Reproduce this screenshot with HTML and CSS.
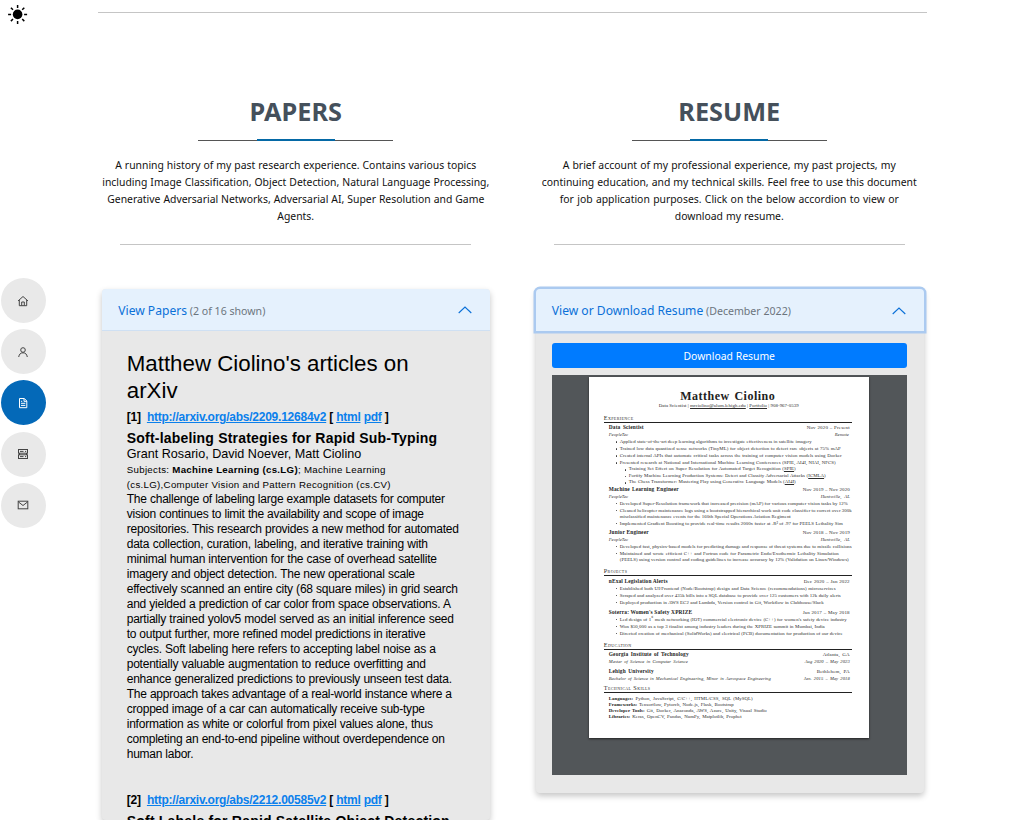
FILE: index.html
```html
<!DOCTYPE html>
<html lang="en">
<head>
<meta charset="utf-8">
<title>Papers and Resume</title>
<link rel="stylesheet" href="styles.css">
</head>
<body>
<div class="theme-toggle">
<svg width="20" height="20" viewBox="0 0 20 20"><circle cx="9.600" cy="10.400" r="4.8" fill="#000"/><path d="M9.600 .9v3M9.600 16.900v3M.1 10.400h3M16.100 10.400h3M2.900 3.700l2.100 2.100M14.200 15l2.100 2.100M2.900 17.100l2.100-2.100M14.200 5.800l2.100-2.100" stroke="#000" stroke-width="1.500"/></svg>
</div>
<nav class="side-nav">
<a class="dot"><svg viewBox="0 0 12 12"><path d="M1 6L6 1.500L11 6M2.300 5V10.700H9.700V5M4.700 10.500V7H7.300V10.500"/></svg></a>
<a class="dot"><svg viewBox="0 0 12 12"><circle cx="6" cy="4" r="2.300"/><path d="M1.700 11C2.200 8.200 3.500 6.800 6 6.800S9.800 8.200 10.300 11"/></svg></a>
<a class="dot active"><svg viewBox="0 0 12 12"><path d="M2.500 1.500H7.300L9.800 4V10.700H2.500ZM7 1.500V4.300H9.800M4 6.300H8.300M4 8.400H8.300M4 4.300H5.200"/></svg></a>
<a class="dot"><svg viewBox="0 0 12 12"><rect x="1.500" y="1.500" width="9" height="3.700"/><rect x="1.500" y="6.800" width="9" height="3.700"/><path d="M3 3.400H6.500M8 3.400H9.200M3 8.600H6.500M8 8.600H9.200M2.500 5V7M9.500 5V7"/></svg></a>
<a class="dot"><svg viewBox="0 0 12 12"><rect x="1.200" y="2.200" width="9.600" height="7.600"/><path d="M1.500 3L6 6.500L10.500 3"/></svg></a>
</nav>
<main>
<hr class="top-rule">
<div class="columns">
<section class="column">
<h2>PAPERS</h2>
<div class="title-rule"></div>
<div class="intro">
<p style="width:361px">A running history of my past research experience. Contains various topics</p>
<p style="width:387px">including Image Classification, Object Detection, Natural Language Processing,</p>
<p style="width:377px">Generative Adversarial Networks, Adversarial AI, Super Resolution and Game</p>
<p style="width:37px">Agents.</p>
</div>
<hr class="intro-rule">
<div class="card papers">
<button class="card-head"><span><b>View Papers</b> (2 of 16 shown)</span><svg class="chevron" viewBox="0 0 14 8"><path d="M.7 7L7 1L13.300 7"/></svg></button>
<div class="articles">
<h3>Matthew Ciolino's articles on<br>arXiv</h3>
<div class="ref">[1] &nbsp;<a>http://arxiv.org/abs/2209.12684v2</a> [ <a>html</a> <a>pdf</a> ]</div>
<h4>Soft-labeling Strategies for Rapid Sub-Typing</h4>
<div class="authors">Grant Rosario, David Noever, Matt Ciolino</div>
<div class="subjects">Subjects: <b>Machine Learning (cs.LG)</b>; Machine Learning<br>(cs.LG),Computer Vision and Pattern Recognition (cs.CV)</div>
<div class="abstract">
<p style="width:318px">The challenge of labeling large example datasets for computer</p>
<p style="width:297px">vision continues to limit the availability and scope of image</p>
<p style="width:332px">repositories. This research provides a new method for automated</p>
<p style="width:301px">data collection, curation, labeling, and iterative training with</p>
<p style="width:310px">minimal human intervention for the case of overhead satellite</p>
<p style="width:288px">imagery and object detection. The new operational scale</p>
<p style="width:331px">effectively scanned an entire city (68 square miles) in grid search</p>
<p style="width:324px">and yielded a prediction of car color from space observations. A</p>
<p style="width:327px">partially trained yolov5 model served as an initial inference seed</p>
<p style="width:298px">to output further, more refined model predictions in iterative</p>
<p style="width:309px">cycles. Soft labeling here refers to accepting label noise as a</p>
<p style="width:299px">potentially valuable augmentation to reduce overfitting and</p>
<p style="width:325px">enhance generalized predictions to previously unseen test data.</p>
<p style="width:325px">The approach takes advantage of a real-world instance where a</p>
<p style="width:298px">cropped image of a car can automatically receive sub-type</p>
<p style="width:306px">information as white or colorful from pixel values alone, thus</p>
<p style="width:318px">completing an end-to-end pipeline without overdependence on</p>
<p style="width:66px">human labor.</p>
</div>
<div class="ref">[2] &nbsp;<a>http://arxiv.org/abs/2212.00585v2</a> [ <a>html</a> <a>pdf</a> ]</div>
<h4>Soft Labels for Rapid Satellite Object Detection</h4>
</div>
</div>
</section>
<section class="column">
<h2>RESUME</h2>
<div class="title-rule"></div>
<div class="intro">
<p style="width:333px">A brief account of my professional experience, my past projects, my</p>
<p style="width:375px">continuing education, and my technical skills. Feel free to use this document</p>
<p style="width:339px">for job application purposes. Click on the below accordion to view or</p>
<p style="width:109px">download my resume.</p>
</div>
<hr class="intro-rule">
<div class="card resume">
<button class="card-head focused"><span><b>View or Download Resume</b> (December 2022)</span><svg class="chevron" viewBox="0 0 14 8"><path d="M.7 7L7 1L13.300 7"/></svg></button>
<div class="resume-body">
<button class="download">Download Resume</button>
<div class="viewer">
<article class="page">
<h1>Matthew Ciolino</h1>
<p class="contact">Data Scientist | <u>mrciolino@alum.lehigh.edu</u> | <u>Portfolio</u> | 908-967-0539</p>
<h5>Experience</h5>
<div class="row"><b style="width:35px">Data Scientist</b><span style="width:43px">Nov 2020 – Present</span></div>
<div class="row it"><i style="width:20px">PeopleTec</i><i style="width:15px">Remote</i></div>
<ul>
<li style="width:192px">Applied state-of-the-art deep learning algorithms to investigate effectiveness in satellite imagery</li>
<li style="width:221px">Trained low data quantized sense networks (TinyML) for object detection to detect rare objects at 75% mAP</li>
<li style="width:222px">Created internal APIs that automate critical tasks across the training of computer vision models using Docker</li>
<li style="width:216px">Presented research at National and International Machine Learning Conferences (SPIE, AI4I, NIAI, NFCS)</li>
</ul>
<ul class="sub">
<li style="width:167px">Training Set Effect on Super Resolution for Automated Target Recognition (<u>SPIE</u>)</li>
<li style="width:197px">Fortify Machine Learning Production Systems: Detect and Classify Adversarial Attacks (<u>ICMLA</u>)</li>
<li style="width:167px">The Chess Transformer: Mastering Play using Generative Language Models (<u>AI4I</u>)</li>
</ul>
<div class="row"><b style="width:70px">Machine Learning Engineer</b><span style="width:47px">Nov 2019 – Nov 2020</span></div>
<div class="row it"><i style="width:20px">PeopleTec</i><i style="width:29px">Huntsville, AL</i></div>
<ul>
<li style="width:228px">Developed Super-Resolution framework that increased precision (mAP) for various computer vision tasks by 12%</li>
<li style="width:232px">Cleaned helicopter maintenance logs using a bootstrapped hierarchical work unit code classifier to correct over 300k</li>
<li class="cont" style="width:171px">misclassified maintenance events for the 160th Special Operations Aviation Regiment</li>
<li style="width:223px">Implemented Gradient Boosting to provide real-time results 2000x faster at .R² of .97 for PEELS Lethality Sim</li>
</ul>
<div class="row gap2"><b style="width:40px">Junior Engineer</b><span style="width:47px">Nov 2018 – Nov 2019</span></div>
<div class="row it"><i style="width:20px">PeopleTec</i><i style="width:29px">Huntsville, AL</i></div>
<ul>
<li style="width:229px">Developed fast, physics-based models for predicting damage and response of threat systems due to missile collisions</li>
<li style="width:219px">Maintained and wrote efficient C++ and Fortran code for Parametric Endo/Exothermic Lethality Simulation</li>
<li class="cont" style="width:229px">(PEELS) using version control and coding guidelines to increase accuracy by 12% (Validation on Linux/Windows)</li>
</ul>
<h5 class="later">Projects</h5>
<div class="row"><b style="width:55px">nExal Legislation Alerts</b><span style="width:46px">Dec 2020 – Jan 2022</span></div>
<ul>
<li style="width:216px">Established both UI/Frontend (Node/Bootstrap) design and Data Science (recommendations) microservices</li>
<li style="width:221px">Scraped and analyzed over 435k bills into a SQL database to provide over 125 customers with 12k daily alerts</li>
<li style="width:204px">Deployed production in AWS EC2 and Lambda, Version control in Git, Workflow in Clubhouse/Slack</li>
</ul>
<div class="row gap3"><b style="width:80px">Soterra: Women's Safety XPRIZE</b><span style="width:47px">Jan 2017 – May 2018</span></div>
<ul>
<li style="width:227px">Led design of 1<sup>st</sup> mesh networking (IOT) commercial electronic device (C++) for women's safety device industry</li>
<li style="width:205px">Won $50,000 as a top 3 finalist among industry leaders during the XPRIZE summit in Mumbai, India</li>
<li style="width:223px">Directed creation of mechanical (SolidWorks) and electrical (PCB) documentation for production of our device</li>
</ul>
<h5 class="later education-head">Education</h5>
<div class="row"><b style="width:80px">Georgia Institute of Technology</b><span style="width:27px">Atlanta, GA</span></div>
<div class="row it"><i style="width:79px">Master of Science in Computer Science</i><i style="width:45px">Aug 2020 – May 2023</i></div>
<div class="row gap3"><b style="width:45px">Lehigh University</b><span style="width:33px">Bethlehem, PA</span></div>
<div class="row it"><i style="width:162px">Bachelor of Science in Mechanical Engineering, Minor in Aerospace Engineering</i><i style="width:46px">Jan. 2015 – May 2018</i></div>
<h5 class="skills-head">Technical Skills</h5>
<div class="skills">
<p style="width:144px"><b>Languages:</b> Python, JavaScript, C/C++, HTML/CSS, SQL (MySQL)</p>
<p style="width:125px"><b>Frameworks:</b> Tensorflow, Pytorch, Node.js, Flask, Bootstrap</p>
<p style="width:158px"><b>Developer Tools:</b> Git, Docker, Anaconda, AWS, Azure, Unity, Visual Studio</p>
<p style="width:133px"><b>Libraries:</b> Keras, OpenCV, Pandas, NumPy, Matplotlib, Prophet</p>
</div>
</article>
</div>
</div>
</div>
</section>
</div>
</main>
</body>
</html>
```
FILE: styles.css
```css
* { box-sizing: border-box; margin: 0; padding: 0; }
body { height: 820px; overflow: hidden; background: #fff; color: #000; font-family: "Noto Sans", sans-serif; }
button { border: 0; font-family: inherit; }

.theme-toggle { position: fixed; left: 8px; top: 4px; }
.theme-toggle svg { display: block; }
.side-nav { position: fixed; left: 1px; top: 278px; display: flex; flex-direction: column; gap: 6.2px; }
.dot { width: 45px; height: 45px; border-radius: 50%; background: #e9e9e9; display: flex; align-items: center; justify-content: center; padding: 0 1px 0 0; }
.dot svg { width: 12px; height: 12px; fill: none; stroke: #444; stroke-width: 1; }
.dot.active { background: #0469b8; }
.dot.active svg { stroke: #fff; }

main { height: 820px; overflow: hidden; padding: 12px 0 0 79px; }
hr { border: 0; height: 1px; background: #c5c5c5; }
.top-rule { width: 829px; margin-left: 19px; }
.columns { display: grid; grid-template-columns: 433.500px 433.500px; padding-top: 80px; }
.column { display: flex; flex-direction: column; align-items: center; }
h2 { font-size: 25.300px; line-height: 36px; font-weight: 700; color: #45505b; }
.title-rule { width: 195px; height: 3px; margin: 9px 0 16px; background: linear-gradient(#0469a6, #0469a6) 58.500px 1px / 78px 2px no-repeat, linear-gradient(#555, #555) 0 2px / 100% 1px no-repeat; }
.intro { display: flex; flex-direction: column; align-items: center; font-size: 10.400px; line-height: 17px; color: #111; }
.intro p, .abstract p { white-space: nowrap; text-align-last: justify; }
.intro-rule { width: 351px; margin: 19px 0 44px; }

.card { width: 388px; margin-left: 1px; background: #e8e8e8; border-radius: 4px; box-shadow: 0 3px 6px rgba(0,0,0,.23); }
.card-head { width: 100%; height: 42px; padding: 1px 18px 0 16px; display: flex; align-items: center; justify-content: space-between; background: #e5f1fd; border-radius: 4px 4px 0 0; border-bottom: 1px solid #cfe0f3; font-size: 10.600px; color: #6c757d; }
.card-head b { font-size: 12.100px; font-weight: 400; color: #0a70d8; }
.card-head.focused { position: relative; box-shadow: 0 0 0 2.500px #abcaf0; border-bottom: 0; }
.chevron { width: 14px; height: 8px; fill: none; stroke: #0a70d8; stroke-width: 1.1; }

.articles { height: 489px; padding: 19px 20px 0 24.500px; font-family: "Liberation Sans", Arial, sans-serif; font-size: 12px; line-height: 15px; }
h3 { font-size: 22.300px; line-height: 27px; font-weight: 400; }
.ref { margin-top: 6px; height: 15px; font-weight: 700; white-space: nowrap; letter-spacing: -.240px; }
.ref a { color: #0b80ec; text-decoration: underline; }
h4 { margin-top: 5px; height: 17px; font-size: 14px; line-height: 17px; white-space: nowrap; letter-spacing: .2px; }
.authors { font-size: 12.600px; }
.subjects { font-size: 9.700px; white-space: nowrap; letter-spacing: .3px; }
.abstract { letter-spacing: -.240px; }
.abstract + .ref { margin-top: 31px; }

.resume-body { padding: 12px 16px 18px; }
.download { display: block; width: 355px; height: 25px; border-radius: 3px; background: #007bff; color: #fff; font-size: 10.400px; margin-bottom: 7px; }
.viewer { width: 355px; height: 400px; background: #525659; padding: 2px 0 0 37px; }

.page { width: 280px; height: 361px; padding: 14px 17px 0 15px; background: #fff; box-shadow: 0 1px 2px #222; color: #2c2c2c; font-family: "Liberation Serif", serif; font-size: 4.850px; letter-spacing: .050px; line-height: 7px; white-space: nowrap; }
.page h1 { font-size: 12px; line-height: 11px; width: 95px; margin: 0 auto; text-align-last: justify; color: #222; letter-spacing: .500px; }
.contact { width: 138px; margin: 0 auto; text-align-last: justify; }
.page h5 { height: 9px; margin: 5px 0 1px; border-bottom: 1px solid #222; font-size: 6.200px; line-height: 8px; font-weight: 400; font-variant: small-caps; letter-spacing: .4px; }
.page h5.later { margin: 4px 0 2px; }
.page h5.education-head { margin-bottom: 1px; }
.page h5.skills-head { margin: 2px 0 3px; }
.row { display: flex; justify-content: space-between; height: 7px; padding: 0 2px 0 5px; }
.row > * { display: block; text-align-last: justify; }
.row > b { font-size: 5.400px; color: #222; letter-spacing: .150px; }
.row > span { font-size: 5px; letter-spacing: .13px; }
.row.it { font-size: 4.600px; }
.gap2 { margin-top: 2px; }
.gap3 { margin-top: 3px; }
.page ul { list-style: none; padding-left: 16px; }
.page li { position: relative; height: 7px; text-align-last: justify; }
.page li::before { content: ""; position: absolute; left: -4px; top: 3px; width: 1.500px; height: 1.500px; border-radius: 50%; background: #333; }
.page li.cont { height: 6px; line-height: 5px; }
.page li.cont::before { display: none; }
.page .sub { padding-left: 25px; }
.page .sub li { height: 6.500px; line-height: 6.500px; }
.page sup { font-size: 3px; line-height: 0; }
.skills { padding-left: 5px; line-height: 6.300px; }
.skills p { text-align-last: justify; }
.skills b { color: #222; }
```
